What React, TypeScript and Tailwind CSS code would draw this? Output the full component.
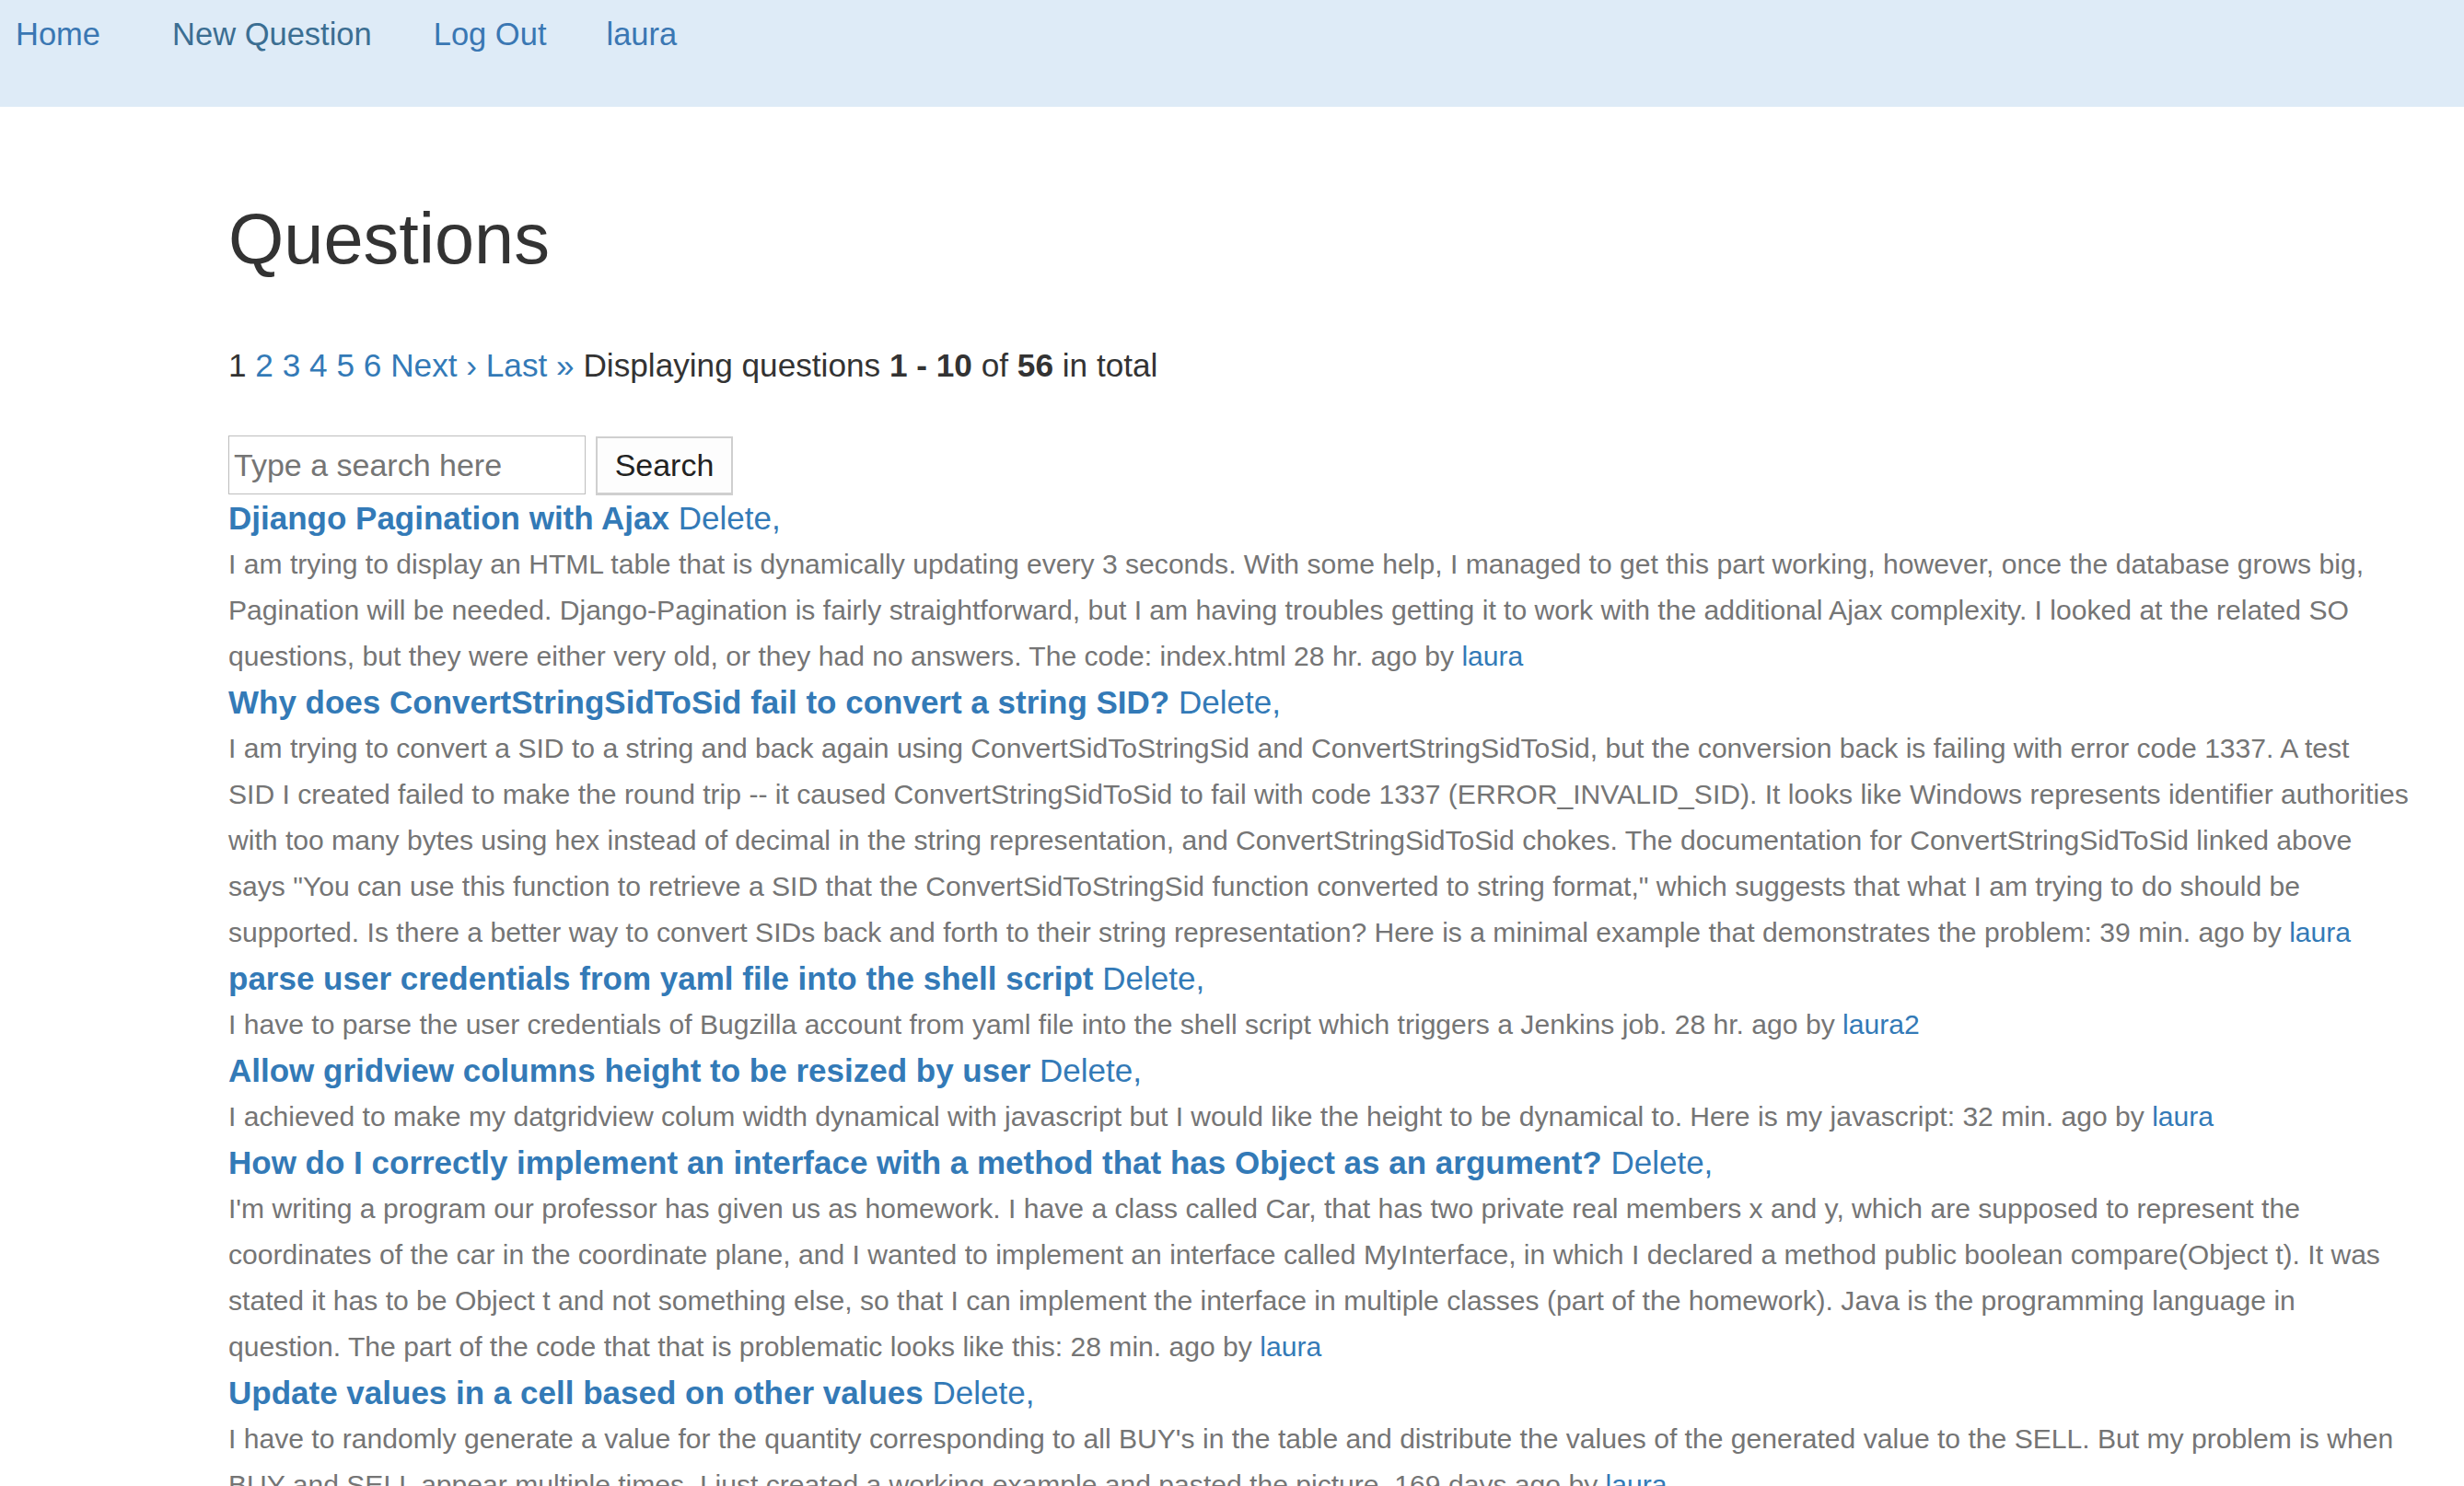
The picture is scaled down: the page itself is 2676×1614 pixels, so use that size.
import React from "react";

type Question = {
  title: string;
  lines: string[];
  ago: string;
  user: string;
};

// description lines break where the original page wrapped them
const questions: Question[] = [
  {
    title: "Djiango Pagination with Ajax",
    lines: [
      "I am trying to display an HTML table that is dynamically updating every 3 seconds. With some help, I managed to get this part working, however, once the database grows big,",
      "Pagination will be needed. Django-Pagination is fairly straightforward, but I am having troubles getting it to work with the additional Ajax complexity. I looked at the related SO",
      "questions, but they were either very old, or they had no answers. The code: index.html",
    ],
    ago: "28 hr. ago",
    user: "laura",
  },
  {
    title: "Why does ConvertStringSidToSid fail to convert a string SID?",
    lines: [
      "I am trying to convert a SID to a string and back again using ConvertSidToStringSid and ConvertStringSidToSid, but the conversion back is failing with error code 1337. A test",
      "SID I created failed to make the round trip -- it caused ConvertStringSidToSid to fail with code 1337 (ERROR_INVALID_SID). It looks like Windows represents identifier authorities",
      "with too many bytes using hex instead of decimal in the string representation, and ConvertStringSidToSid chokes. The documentation for ConvertStringSidToSid linked above",
      "says \"You can use this function to retrieve a SID that the ConvertSidToStringSid function converted to string format,\" which suggests that what I am trying to do should be",
      "supported. Is there a better way to convert SIDs back and forth to their string representation? Here is a minimal example that demonstrates the problem:",
    ],
    ago: "39 min. ago",
    user: "laura",
  },
  {
    title: "parse user credentials from yaml file into the shell script",
    lines: [
      "I have to parse the user credentials of Bugzilla account from yaml file into the shell script which triggers a Jenkins job.",
    ],
    ago: "28 hr. ago",
    user: "laura2",
  },
  {
    title: "Allow gridview columns height to be resized by user",
    lines: [
      "I achieved to make my datgridview colum width dynamical with javascript but I would like the height to be dynamical to. Here is my javascript:",
    ],
    ago: "32 min. ago",
    user: "laura",
  },
  {
    title: "How do I correctly implement an interface with a method that has Object as an argument?",
    lines: [
      "I'm writing a program our professor has given us as homework. I have a class called Car, that has two private real members x and y, which are supposed to represent the",
      "coordinates of the car in the coordinate plane, and I wanted to implement an interface called MyInterface, in which I declared a method public boolean compare(Object t). It was",
      "stated it has to be Object t and not something else, so that I can implement the interface in multiple classes (part of the homework). Java is the programming language in",
      "question. The part of the code that that is problematic looks like this:",
    ],
    ago: "28 min. ago",
    user: "laura",
  },
  {
    title: "Update values in a cell based on other values",
    lines: [
      "I have to randomly generate a value for the quantity corresponding to all BUY's in the table and distribute the values of the generated value to the SELL. But my problem is when",
      "BUY and SELL appear multiple times. I just created a working example and pasted the picture.",
    ],
    ago: "169 days ago",
    user: "laura",
  },
];

function QuestionItem({ q }: { q: Question }) {
  return (
    <div>
      <div className="text-[35px] leading-[50px]">
        <a href="#" className="font-bold text-[#337ab7]">{q.title}</a>{" "}
        <a href="#" className="text-[#337ab7]">Delete,</a>
      </div>
      <p className="text-[30.1px] leading-[50px] text-[#757575]">
        {q.lines.map((line, i) => (
          <React.Fragment key={i}>
            {line}
            {i < q.lines.length - 1 && <br />}
          </React.Fragment>
        ))}{" "}
        {q.ago} by <a href="#" className="text-[#337ab7]">{q.user}</a>
      </p>
    </div>
  );
}

export default function App() {
  return (
    <div className="min-h-screen bg-white font-['Liberation_Sans',Arial,sans-serif] text-[#333333]">
      {/* Top nav */}
      <nav className="h-[116px] bg-[#deebf7] pt-[12px] pl-[17px] flex items-start text-[34.5px] leading-[50px]">
        <a href="#" className="text-[#3a77b3]">Home</a>
        <a href="#" className="ml-[78px] text-[#3b6e92]">New Question</a>
        <a href="#" className="ml-[67px] text-[#3a77b3]">Log Out</a>
        <a href="#" className="ml-[65px] text-[#3a77b3]">laura</a>
      </nav>

      <div className="pl-[248px]">
        <div className="w-[2400px]">
          <h1 className="mt-[101px] text-[77.5px] leading-[85px] font-normal text-[#333333]">Questions</h1>

          {/* Pagination */}
          <div className="mt-[70px] text-[35.2px] leading-[50px]">
            1 <a href="#" className="text-[#337ab7]">2</a> <a href="#" className="text-[#337ab7]">3</a>{" "}
            <a href="#" className="text-[#337ab7]">4</a> <a href="#" className="text-[#337ab7]">5</a>{" "}
            <a href="#" className="text-[#337ab7]">6</a> <a href="#" className="text-[#337ab7]">Next ›</a>{" "}
            <a href="#" className="text-[#337ab7]">Last »</a> Displaying questions <b>1&nbsp;-&nbsp;10</b> of{" "}
            <b>56</b> in total
          </div>

          {/* Search */}
          <form className="mt-[51px] flex items-start gap-[11px]" onSubmit={(e) => e.preventDefault()}>
            <input
              type="text"
              placeholder="Type a search here"
              className="h-[64px] w-[388px] border border-[#bdbdbd] bg-white px-[5px] text-[34px] text-[#333333] placeholder:text-[#757575] outline-none"
            />
            <button
              type="submit"
              className="mt-[1px] h-[64px] w-[149px] border-2 border-b-[3px] border-[#cfcfcf] bg-[#fdfdfd] text-[34px] text-[#222222]"
            >
              Search
            </button>
          </form>

          {/* Questions list */}
          <div>
            {questions.map((q, i) => (
              <QuestionItem key={i} q={q} />
            ))}
          </div>
        </div>
      </div>
    </div>
  );
}
